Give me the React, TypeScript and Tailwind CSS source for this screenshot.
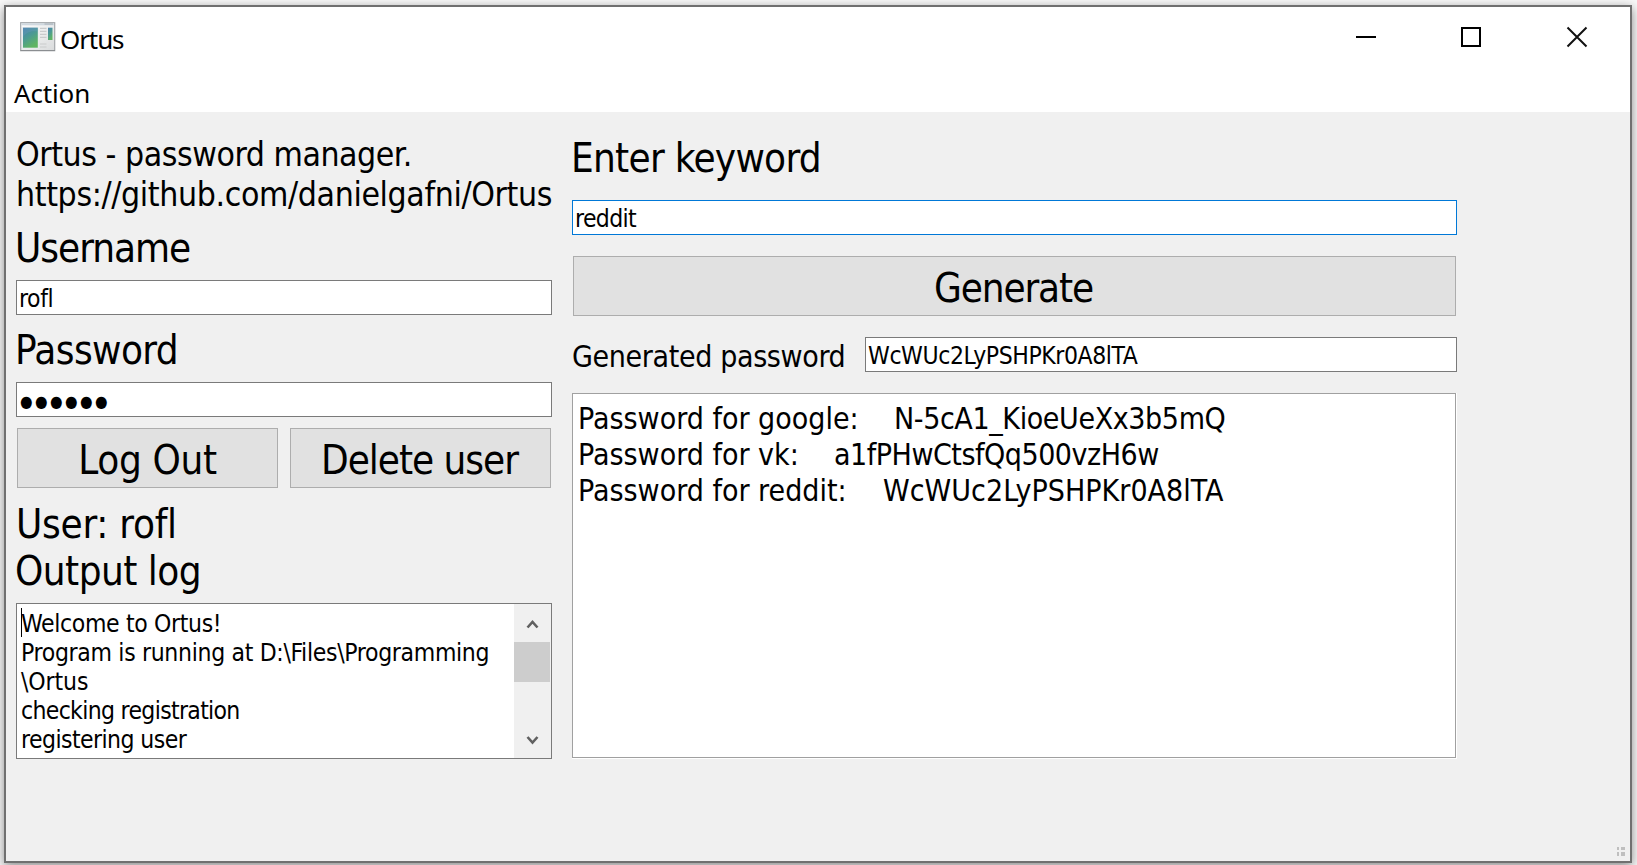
import React from "react";

const ui = "font-['DejaVu_Sans_Condensed','DejaVu_Sans',sans-serif]";

function Label({ className = "", children }: { className?: string; children: React.ReactNode }) {
  return <div className={`whitespace-nowrap text-[40px] ${className}`}>{children}</div>;
}

function Field({ className = "", children }: { className?: string; children: React.ReactNode }) {
  return (
    <div className={`h-[35px] whitespace-nowrap border bg-white text-[24.5px] leading-[35px] ${className}`}>
      {children}
    </div>
  );
}

function PushButton({ className = "", children }: { className?: string; children: React.ReactNode }) {
  return (
    <button
      className={`flex h-[60px] justify-center whitespace-nowrap border border-[#adadad] bg-[#e1e1e1] text-[40px] leading-[62px] ${className}`}
    >
      {children}
    </button>
  );
}

function AppIcon() {
  return (
    <svg width="36" height="30" viewBox="0 0 36 30">
      <defs>
        <linearGradient id="scene" x1="0" y1="0" x2="0.5" y2="1">
          <stop offset="0" stopColor="#4a7fae" />
          <stop offset="0.5" stopColor="#4c9a94" />
          <stop offset="1" stopColor="#5fb562" />
        </linearGradient>
        <linearGradient id="frame" x1="0" y1="0" x2="1" y2="1">
          <stop offset="0" stopColor="#ffffff" />
          <stop offset="1" stopColor="#d9dbdc" />
        </linearGradient>
      </defs>
      <rect x="0.7" y="0.7" width="34" height="28" fill="url(#frame)" stroke="#a3a7aa" strokeWidth="1.2" />
      <path d="M0.5 28.5H35" stroke="#8b8e91" />
      <rect x="1.5" y="1.3" width="32.5" height="2" fill="#cfd8df" />
      <path d="M24.5 2h8.5" stroke="#9aa3aa" strokeWidth="0.8" />
      <rect x="2" y="5" width="16.5" height="21.5" fill="#e9eef0" />
      <rect x="3" y="5.7" width="14.8" height="20" fill="url(#scene)" />
      <path d="M3 15C7 9.5 12 8.5 17.8 9.5V5.7H3Z" fill="#6fa0c4" opacity="0.3" />
      <path d="M20 6.3h6.5M20 9.3h6.5M20 12.3h6.5M20 15.3h6.5M20 22h6.5M20 25h6.5" stroke="#c9cbcc" strokeWidth="1.2" />
      <rect x="28" y="5.7" width="4.5" height="12.3" fill="url(#scene)" />
    </svg>
  );
}

const log = [
  { text: "Welcome to Ortus!", cls: "tracking-[-0.34px]" },
  { text: "Program is running at D:\\Files\\Programming", cls: "tracking-[-0.32px]" },
  { text: "\\Ortus", cls: "tracking-[-0.1px]" },
  { text: "checking registration", cls: "tracking-[-0.67px]" },
  { text: "registering user", cls: "tracking-[-0.56px]" },
];

const passwords = [
  { site: "google", value: "N-5cA1_KioeUeXx3b5mQ", cls: "w-[316px]", track: "tracking-[-0.39px]" },
  { site: "vk", value: "a1fPHwCtsfQq500vzH6w", cls: "w-[256px]", track: "tracking-[-0.48px]" },
  { site: "reddit", value: "WcWUc2LyPSHPKr0A8lTA", cls: "w-[305px]", track: "tracking-[0.03px]" },
];

export default function App() {
  return (
    <div className={`h-[865px] w-[1637px] overflow-hidden bg-[#f8f8f8] pl-1 pt-[5px] text-black [font-variant-ligatures:none] ${ui}`}>
      <div className="flex h-[858px] w-[1628px] flex-col border-2 border-[#707070] bg-[#f0f0f0] shadow-[0_3px_10px_rgba(0,0,0,0.45)]">
        <header className="h-[105px] shrink-0 bg-white font-['Noto_Sans',sans-serif] text-[26px]">
          <div className="flex h-[60px] justify-between">
            <div className="flex pl-[14px] pt-[15px]">
              <AppIcon />
              <span className="ml-[4px] mt-[2px] leading-[30px] tracking-[-1.1px]">Ortus</span>
            </div>
            <svg className="mr-[42px] mt-[19px]" width="236" height="24" viewBox="0 0 236 24">
              <path d="M4 11h20" stroke="#000" strokeWidth="2" />
              <rect x="110" y="2" width="18" height="18" fill="none" stroke="#000" strokeWidth="2" />
              <path d="M215.500 1.500l19 19M234.500 1.500l-19 19" stroke="#111" strokeWidth="2" />
            </svg>
          </div>
          <div className="pl-[8px] pt-[8px] leading-[36px] tracking-[-0.15px]">Action</div>
        </header>

        <main className="flex flex-1 pl-[10px] pt-[22px]">
          <section className="w-[536px]">
            <div className="h-[80px] whitespace-nowrap pt-px text-[33.5px] leading-[40px]">
              <div className="tracking-[-0.46px]">Ortus - password manager.</div>
              <div className="tracking-[-0.37px]">https://github.com/danielgafni/Ortus</div>
            </div>
            <Label className="-ml-px h-[66px] leading-[69px] tracking-[-1.04px]">Username</Label>
            <Field className="border-[#7a7a7a] pl-[2px] tracking-[-0.4px]">rofl</Field>
            <Label className="-ml-px h-[67px] leading-[71px] tracking-[-0.6px]">Password</Label>
            <Field className="border-[#7a7a7a] pl-[3px]">
              <span className="block text-[16px] leading-[37px] tracking-[2.43px]">●●●●●●</span>
            </Field>
            <div className="mt-[11px] flex justify-between px-px">
              <PushButton className="w-[261px] tracking-[-0.36px]">Log Out</PushButton>
              <PushButton className="w-[261px] pr-[2px] tracking-[-1.02px]">Delete user</PushButton>
            </div>
            <div className="h-[115px] pt-[13px]">
              <Label className="leading-[47px] tracking-[-0.27px]">User: rofl</Label>
              <Label className="-ml-px leading-[47px] tracking-[-0.53px]">Output log</Label>
            </div>
            <div className="relative flex h-[156px] justify-between overflow-hidden border border-[#7a7a7a] bg-white">
              <div className="whitespace-nowrap pl-[4px] pt-[5px] text-[24.5px] leading-[29px]">
                {log.map((l) => (
                  <div key={l.text} className={l.cls}>{l.text}</div>
                ))}
              </div>
              <i className="absolute left-[4px] top-[4px] h-[29px] w-px bg-black" />
              <div className="flex w-[37px] flex-col bg-[#f0f0f0] pr-px">
                <svg width="36" height="38" viewBox="0 0 36 38">
                  <path d="M13.500 23.500l5-5.500 5 5.500" fill="none" stroke="#606060" strokeWidth="2.600" />
                </svg>
                <div className="h-[40px] bg-[#cdcdcd]" />
                <div className="flex-1" />
                <svg width="36" height="38" viewBox="0 0 36 38">
                  <path d="M13.500 17l5 5.500 5-5.500" fill="none" stroke="#606060" strokeWidth="2.600" />
                </svg>
              </div>
            </div>
          </section>

          <section className="ml-[20px] w-[885px]">
            <Label className="-ml-px h-[48px] leading-[49px] tracking-[-0.72px]">Enter keyword</Label>
            <Field className="mt-[18px] border-[#0078d7] pl-[2px] tracking-[-0.64px]">reddit</Field>
            <PushButton className="ml-px mt-[21px] w-[883px] pr-[2px] tracking-[-1.13px]">Generate</PushButton>
            <div className="mt-[21px] flex justify-between">
              <div className="h-[35px] whitespace-nowrap text-[30px] leading-[39px] tracking-[-0.36px]">
                Generated password
              </div>
              <Field className="w-[592px] border-[#7a7a7a] pl-[2px] tracking-[-0.41px]">WcWUc2LyPSHPKr0A8lTA</Field>
            </div>
            <div className="mt-[21px] h-[366px] border-b border-r border-white">
              <div className="h-full whitespace-nowrap border border-[#a0a0a0] bg-white pl-[5px] pt-[7px] text-[30px] leading-[36px]">
                {passwords.map((p) => (
                  <div key={p.site} className="flex">
                    <span className={p.cls}>Password for {p.site}:</span>
                    <span className={p.track}>{p.value}</span>
                  </div>
                ))}
              </div>
            </div>
          </section>
        </main>

        <footer className="flex h-[14px] shrink-0 justify-end pr-[5px]">
          <svg width="8" height="9" viewBox="0 0 8 9" fill="#bfbfbf">
            <path d="M0 0h2v3H0zM4 0h4v3H4zM0 5h2v4H0zM4 5h4v4H4z" />
          </svg>
        </footer>
      </div>
    </div>
  );
}
